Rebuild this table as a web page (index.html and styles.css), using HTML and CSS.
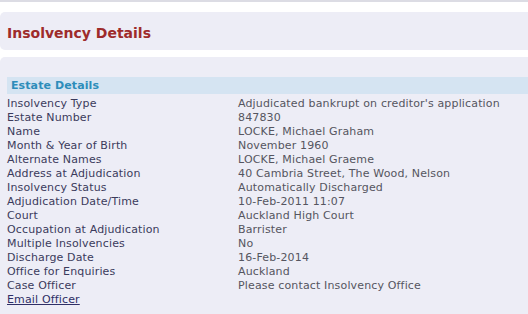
FILE: index.html
```html
<!DOCTYPE html>
<html>
<head>
<meta charset="utf-8">
<link rel="stylesheet" href="styles.css">
</head>
<body>
<div class="topline"></div>
<div class="header"><h1 class="title">Insolvency Details</h1></div>
<div class="panel">
  <div class="section-bar">Estate Details</div>
  <div class="details">
    <div class="label">Insolvency Type</div><div class="value">Adjudicated bankrupt on creditor's application</div>
    <div class="label">Estate Number</div><div class="value">847830</div>
    <div class="label">Name</div><div class="value">LOCKE, Michael Graham</div>
    <div class="label">Month &amp; Year of Birth</div><div class="value">November 1960</div>
    <div class="label">Alternate Names</div><div class="value">LOCKE, Michael Graeme</div>
    <div class="label">Address at Adjudication</div><div class="value">40 Cambria Street, The Wood, Nelson</div>
    <div class="label">Insolvency Status</div><div class="value">Automatically Discharged</div>
    <div class="label">Adjudication Date/Time</div><div class="value">10-Feb-2011 11:07</div>
    <div class="label">Court</div><div class="value">Auckland High Court</div>
    <div class="label">Occupation at Adjudication</div><div class="value">Barrister</div>
    <div class="label">Multiple Insolvencies</div><div class="value">No</div>
    <div class="label">Discharge Date</div><div class="value">16-Feb-2014</div>
    <div class="label">Office for Enquiries</div><div class="value">Auckland</div>
    <div class="label">Case Officer</div><div class="value">Please contact Insolvency Office</div>
    <div class="label"><a class="email" href="#">Email Officer</a></div><div class="value"></div>
  </div>
</div>
</body>
</html>
```
FILE: styles.css
```css
html, body {
  margin: 0;
  padding: 0;
  background: #ffffff;
  font-family: "DejaVu Sans", Verdana, sans-serif;
}
.topline {
  height: 2px;
  background: #dcdce4;
}
.header {
  margin-top: 10px;
  height: 38px;
  background: #ededf6;
  border-radius: 5px 0 0 5px;
  display: flex;
  align-items: center;
  padding-left: 7px;
}
.title {
  margin: 0;
  font-size: 14px;
  font-weight: bold;
  color: #9e2b2b;
  padding-top: 4px;
}
.panel {
  margin-top: 7px;
  background: #ededf6;
  border-radius: 5px 0 0 0;
  padding-top: 20px;
  padding-left: 7px;
  height: 237px;
}
.section-bar {
  height: 17px;
  background: #d5e4f2;
  color: #2d8dba;
  font-weight: bold;
  font-size: 11px;
  line-height: 18px;
  padding-left: 4px;
  letter-spacing: 0.1px;
}
.details {
  display: grid;
  grid-template-columns: 231px 1fr;
  font-size: 11px;
  line-height: 14px;
  margin-top: 3px;
  letter-spacing: 0.15px;
}
.label {
  color: #3b3b5c;
}
.value {
  color: #555560;
}
.email {
  color: #2f2f66;
  text-decoration: underline;
}
```
